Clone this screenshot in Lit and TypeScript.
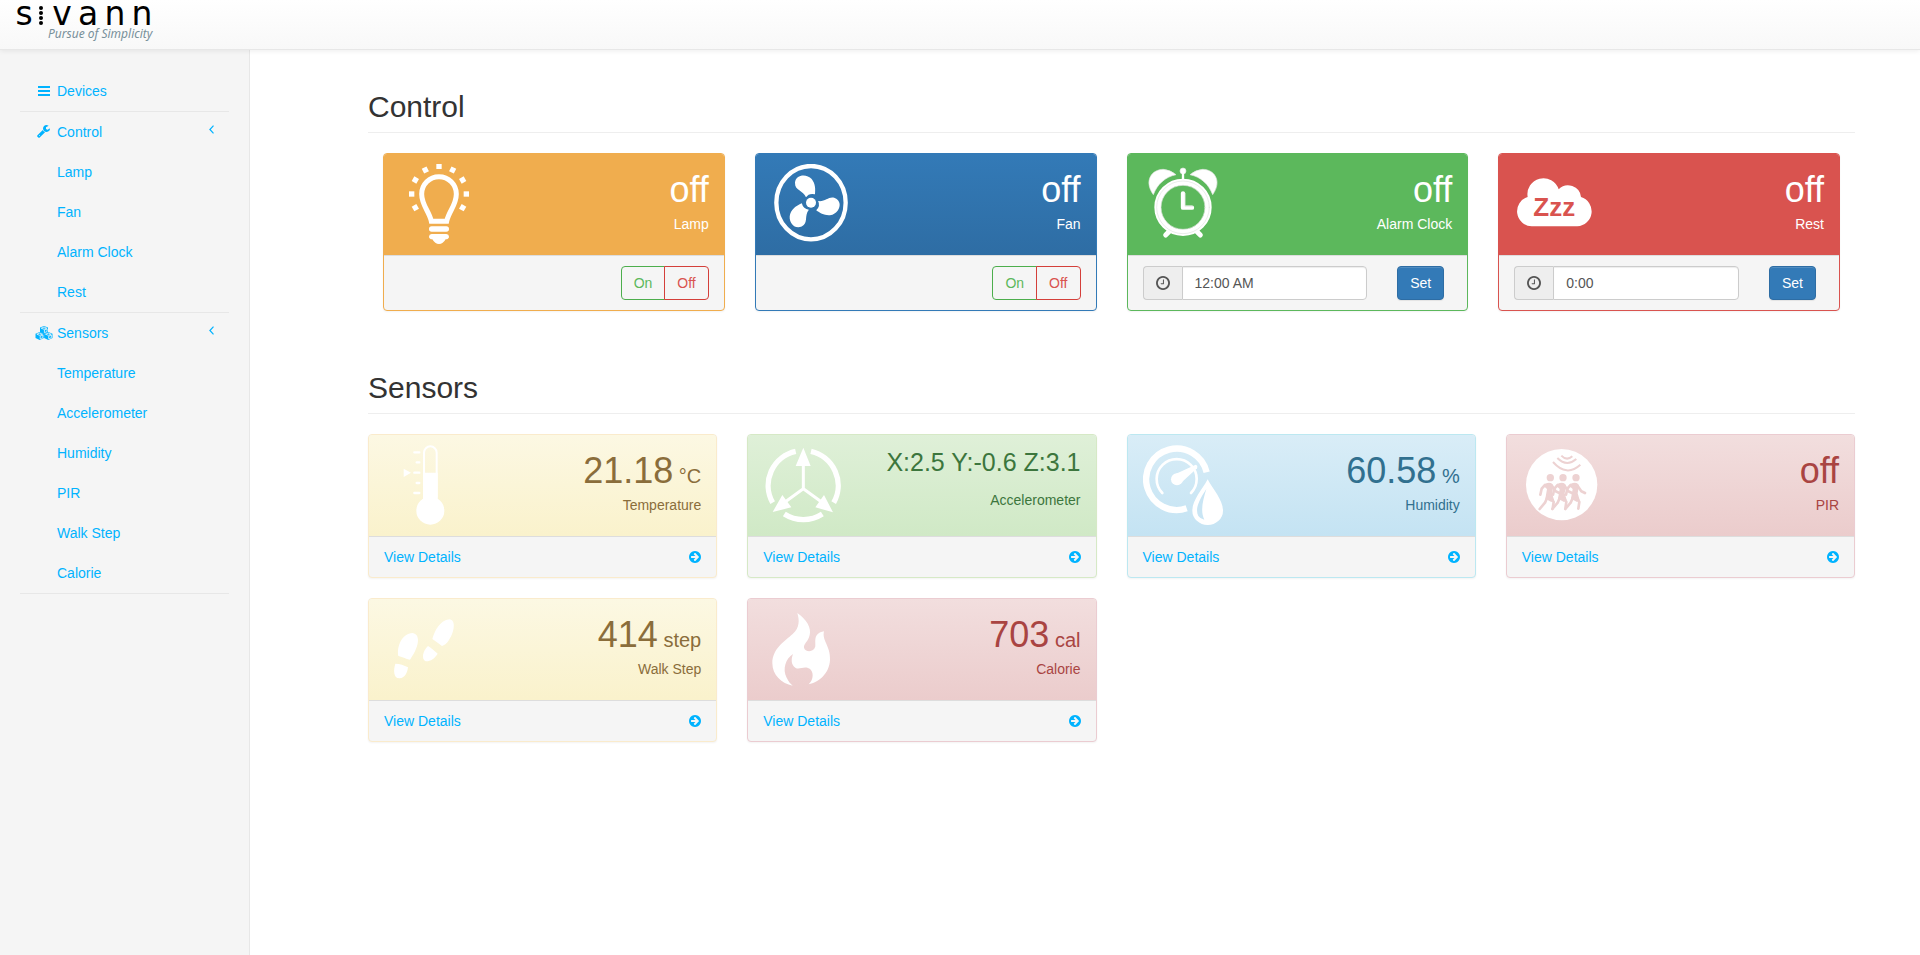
import { LitElement, html, svg, css, nothing } from "lit";
import { customElement, state } from "lit/decorators.js";

const wrench = svg`<path d="M384 1344q0-26-19-45t-45-19-45 19-19 45 19 45 45 19 45-19 19-45zm644-420l-682 682q-37 37-90 37-52 0-91-37l-106-108q-38-36-38-90 0-53 38-91l681-681q39 98 114.500 173.500t173.500 114.500zm634-435q0 39-23 106-47 134-164.500 217.500t-258.500 83.500q-185 0-316.500-131.500t-131.500-316.500 131.500-316.500 316.500-131.500q58 0 121.500 16.500t107.500 46.500q16 11 16 28t-16 28l-293 169v224l193 107q5-3 79-48.500t135.500-81 70.500-35.500q15 0 23.500 10t8.500 25z"/>`;

const menuIcons: Record<string, unknown> = {
  bars: html`<svg class="nav-icon" viewBox="0 0 18 14" aria-hidden="true"><path d="M3 2h12v2H3zM3 6h12v2H3zM3 10h12v2H3z"/></svg>`,
  wrench: html`<svg class="nav-icon" viewBox="-256 0 2304 1792" aria-hidden="true">${wrench}</svg>`,
  cubes: html`<svg class="nav-icon" viewBox="0 0 18 14" aria-hidden="true">
    <path d="M9 0l4 1.600v4.300L9 7.800 5 5.900V1.600zM4.700 6l4.200 1.800v4.300l-4.200 1.900-4.200-1.900V7.800zM13.300 6l4.200 1.800v4.300l-4.200 1.900-4.200-1.900V7.800z"/>
    <g fill="none" stroke="#f5f5f5" stroke-width=".8"><path d="M6.200 2.200L9 3.300l2.800-1.100L9 1.100zM9.400 4v2.700l2.700-1.200V2.900zM1.900 8.200l2.800 1.100 2.800-1.100L4.700 7.100zM5.200 10.200v2.700l2.700-1.200V9zM10.500 8.200l2.800 1.100 2.800-1.100-2.800-1.100zM13.700 10.200v2.700l2.700-1.200V9z"/></g>
  </svg>`,
};

const chevron = html`<svg class="chevron" viewBox="0 0 5 9" aria-hidden="true"><path d="M4.500 .7L.9 4.500l3.600 3.800" fill="none" stroke="currentColor" stroke-width="1.200"/></svg>`;

const arrow = html`<svg class="arrow" viewBox="128 128 1536 1536" aria-hidden="true"><path d="M1413 896q0-27-18-45l-91-91-362-362q-18-18-45-18t-45 18l-91 91q-18 18-18 45t18 45l189 189h-502q-26 0-45 19t-19 45v128q0 26 19 45t45 19h502l-189 189q-19 19-19 45t19 45l91 91q18 18 45 18t45-18l362-362 91-91q18-18 18-45zm251 0q0 209-103 385.500t-279.500 279.500-385.500 103-385.500-103-279.500-279.500-103-385.500 103-385.500 279.500-279.500 385.500-103 385.500 103 279.500 279.500 103 385.500z"/></svg>`;

const clock = html`<svg class="clock" viewBox="128 128 1536 1536" aria-hidden="true"><path d="M1000 544v448q0 14-9 23t-23 9h-290q-14 0-23-9t-9-23v-50q0-14 9-23t23-9h210v-366q0-14 9-23t23-9h48q14 0 23 9t9 23zm460 352q0-154-76-284t-206-206-282-76-282 76-206 206-76 284 76 284 206 206 282 76 282-76 206-206 76-284zm204 0q0 209-103 385.500t-279.500 279.500-385.500 103-385.500-103-279.500-279.500-103-385.500 103-385.500 279.500-279.500 385.500-103 385.500 103 279.500 279.500 103 385.500z"/></svg>`;

const blade = "M198 172C190 150 164 152 165 128C167 103 200 100 215 117C227 132 226 148 225 163Q207 158 198 172Z";
const bell = "M130 164C100 122 126 88 160 88Q180 89 198 104C166 111 142 132 130 164Z";
const walker = svg`<circle cx="181" cy="173" r="11"/>
  <path d="M160 197Q166 188 177 188Q189 188 190 199L186 220L192 240L184 246L166 236L171 207Z"/>
  <path d="M165 195L155 206L151 224M172 232L165 248L149 267M184 235L191 246L188 266M186 198L197 214L208 219" fill="none" stroke="#edd2d2" stroke-width="8" stroke-linecap="round" stroke-linejoin="round"/>`;

const pictures: Record<string, [string, unknown]> = {
  lamp: ["117 252 240 240", svg`
    ${[[237, 259, 0], [196, 270, -27], [278, 270, 27], [166, 300, -60], [308, 300, 60], [155, 342, 0], [319, 342, 0], [166, 383, 60], [308, 383, -60]].map(
      ([x, y, r]) => svg`<rect x=${x - 8} y=${y - 8} width="16" height="16" transform="rotate(${r} ${x} ${y})"/>`,
    )}
    <path d="M214 424C208 394 185 376 185 342A52 52 0 0 1 289 342C289 376 266 394 260 424Z" fill="none" stroke="#fff" stroke-width="15"/>
    <rect x="207" y="439" width="60" height="16" rx="8"/>
    <path d="M215 462H259Q267 463 267 470T257 478Q249 492 237 492T217 478Q207 477 207 470T215 462Z"/>`],
  fan: ["93 72 240 240", svg`
    <ellipse cx="213" cy="188" rx="104" ry="110" fill="none" stroke="#fff" stroke-width="13"/>
    <circle cx="213" cy="188" r="15"/>
    <path d=${blade}/><path d=${blade} transform="rotate(120 213 188)"/><path d=${blade} transform="rotate(240 213 188)"/>`],
  alarm: ["99 72 240 240", svg`
    <g stroke="#e2e6e2" stroke-width="2"><path d=${bell}/><path d=${bell} transform="translate(438 0) scale(-1 1)"/><circle cx="219" cy="93" r="9"/></g>
    <g fill="none" stroke="#fff" stroke-linecap="round" stroke-linejoin="round">
      <path d="M219 98V120" stroke-width="7"/>
      <path d="M182 270L167 285M256 270L271 285" stroke-width="15"/>
      <circle cx="219" cy="202" r="76" stroke-width="20"/>
      <path d="M219 160V203H246" stroke-width="13"/>
      <g stroke="#dfe4df" stroke-width="2"><circle cx="219" cy="202" r="79"/><circle cx="219" cy="202" r="66"/><path d="M225 160V199H249"/></g>
    </g>`],
  rest: ["102 72 240 240", svg`
    <path d="M155 259A45 45 0 0 1 143 171A48 48 0 0 1 236 148A39 39 0 0 1 303 171A45 45 0 0 1 292 259Z"/>
    <text class="zzz" x="160" y="228">Zzz</text>`],
  thermometer: ["72 75 240 240", svg`
    <rect x="192" y="79" width="38" height="170" rx="19" fill="none" stroke="#fff" stroke-width="6"/>
    <path d="M189 158H233V250H189Z"/><circle cx="211" cy="272" r="42"/>
    <path d="M163 97H178M170 127H178M163 158H178M170 189H178M163 219H178" stroke="#fff" stroke-width="7" stroke-linecap="round"/>
    <path d="M131 146L153 158L131 171Z"/>`],
  axes: ["69 75 240 240", svg`
    <g fill="none" stroke="#fff">
      <path d="M167 94A105 105 0 0 0 98 248M213 94A105 105 0 0 1 281 248M133 282A105 105 0 0 0 247 282" stroke-width="16"/>
      <path d="M190 130V206L130 250M190 206L250 250" stroke-width="9"/>
    </g>
    <path d="M190 83L212 138H167ZM98 276L127 225L154 262ZM279 277L252 225L226 262Z"/>`],
  gauge: ["99 75 240 240", svg`
    <g fill="none" stroke="#fff">
      <path d="M230 265A92 92 0 1 1 290 157" stroke-width="19"/>
      <path d="M157 219A60 60 0 1 1 243 219" stroke-width="8" stroke-linecap="round"/>
    </g>
    <circle cx="201" cy="178" r="18"/><path d="M190 165L257 134Q264 136 261 145L212 190Z"/>
    <path d="M293 178C310 210 339 240 339 272A46 43 0 0 1 247 272C247 240 276 210 293 178Z"/>
    <path d="M289 207C262 248 256 270 265 288Q271 297 283 299C270 272 279 240 289 207Z" fill="#c9e5f4"/>`],
  motion: ["96 75 240 240", svg`
    <circle cx="215" cy="194" r="107"/>
    <g fill="#edd2d2">
      ${walker}<g transform="translate(38 0)">${walker}</g><g transform="translate(77 0)">${walker}</g>
    </g>
    <path d="M214 107Q230 124 247 109M202 114Q230 142 259 117M189 126Q230 172 271 134" fill="none" stroke="#edd2d2" stroke-width="6"/>`],
  steps: ["72 72 240 240", svg`
    <path d="M115 213C110 185 125 146 158 144C185 149 175 190 150 224C138 222 125 215 115 213Z"/>
    <path d="M106 236C120 236 132 241 144 247C142 265 133 281 118 280C100 279 100 255 106 236Z"/>
    <path d="M217 162C225 135 240 107 268 103C288 104 284 140 267 165C260 177 252 181 246 183C237 177 227 168 217 162Z"/>
    <path d="M204 183C215 190 224 198 233 206C225 220 210 230 197 229C183 222 188 198 204 183Z"/>`],
  flame: ["69 72 240 240", svg`
    <path d="M172 84C200 103 215 130 209 150C205 170 190 176 192 188C195 202 222 203 226 184C228 170 218 146 252 139C245 167 272 183 270 225C268 265 237 292 206 298C222 282 221 260 209 251C192 241 178 256 166 248C153 240 153 222 159 207C138 220 126 252 140 278C146 290 152 297 158 302C125 296 97 270 97 235C97 190 135 168 158 147C180 127 178 105 172 84Z"/>`],
};

const picture = (name: string) => html`<svg class="picture" viewBox=${pictures[name][0]} aria-hidden="true">${pictures[name][1]}</svg>`;

interface Control { tone: string; icon: string; label: string; time?: string }
interface Sensor { tone: string; icon: string; label: string; value: string; unit?: string; compact?: boolean }

const controls: Control[] = [
  { tone: "orange", icon: "lamp", label: "Lamp" },
  { tone: "blue", icon: "fan", label: "Fan" },
  { tone: "green", icon: "alarm", label: "Alarm Clock", time: "12:00 AM" },
  { tone: "red", icon: "rest", label: "Rest", time: "0:00" },
];

const sensors: Sensor[] = [
  { tone: "warning", icon: "thermometer", label: "Temperature", value: "21.18", unit: "°C" },
  { tone: "success", icon: "axes", label: "Accelerometer", value: "X:2.5 Y:-0.6 Z:3.1", compact: true },
  { tone: "info", icon: "gauge", label: "Humidity", value: "60.58", unit: "%" },
  { tone: "danger", icon: "motion", label: "PIR", value: "off" },
  { tone: "warning", icon: "steps", label: "Walk Step", value: "414", unit: "step" },
  { tone: "danger", icon: "flame", label: "Calorie", value: "703", unit: "cal" },
];

const menu = [
  { icon: "bars", label: "Devices", items: [] as string[] },
  { icon: "wrench", label: "Control", items: controls.map((c) => c.label) },
  { icon: "cubes", label: "Sensors", items: sensors.map((s) => s.label) },
];

@customElement("app-root")
export class AppRoot extends LitElement {
  @state() private power: Record<string, string> = {};

  static styles = css`
    :host { display: flex; flex-direction: column; min-height: 100vh; background: #fff; color: #333; font: 14px/20px "Liberation Sans", Arial, sans-serif; }
    * { box-sizing: border-box; }
    a { color: #00b3ff; text-decoration: none; }
    svg { display: block; fill: currentColor; }
    .topbar { position: relative; z-index: 1; height: 50px; border-bottom: 1px solid #e7e7e7; background: linear-gradient(#fff, #f8f8f8); box-shadow: 0 1px 5px rgba(0, 0, 0, .075); }
    .brand { display: inline-block; padding-left: 12px; }
    .logo { width: 144px; height: 44px; }
    .wordmark { font: 33px "DejaVu Sans", sans-serif; fill: #000; text-anchor: middle; }
    .tagline { font: italic 12px "Noto Sans", "Open Sans", sans-serif; fill: #78909a; }
    .layout { flex: 1; display: flex; }
    .sidebar { flex: none; width: 250px; padding: 21px 20px; border-right: 1px solid #e7e7e7; background: #f5f5f5; }
    .menu, .submenu { list-style: none; margin: 0; padding: 0; }
    .group { border-bottom: 1px solid #e7e7e7; }
    .link { display: flex; align-items: center; gap: 4px; padding: 10px 15px; }
    .submenu .link { padding-left: 37px; }
    .nav-icon { width: 18px; height: 14px; }
    .chevron { width: 5px; height: 9px; margin: 0 0 6px auto; }
    .content { flex: 1; min-width: 0; padding: 40px 65px 20px 118px; }
    .title { margin: 0 0 20px; padding-bottom: 9px; border-bottom: 1px solid #eee; font-size: 30px; line-height: 33px; font-weight: 400; }
    .cards { display: grid; grid-template-columns: repeat(4, minmax(0, 1fr)); gap: 20px 30px; }
    .controls { padding: 0 15px; margin-bottom: 60px; }
    .card { border: 1px solid var(--edge); border-radius: 4px; background: #f5f5f5; box-shadow: 0 1px 2px rgba(0, 0, 0, .05); overflow: hidden; }
    .head { display: flex; justify-content: space-between; padding: 10px 15px 11px; background: var(--fill); color: var(--ink); }
    .picture { flex: none; width: 80px; height: 80px; fill: #fff; }
    .zzz { font: 700 78px "Liberation Sans", Arial, sans-serif; fill: #d9534f; }
    .reading { padding-top: 1px; text-align: right; white-space: nowrap; }
    .value { font-size: 36px; line-height: 49px; }
    .unit { font-size: 20px; line-height: 20px; }
    .compact { font-size: 25px; line-height: 32px; margin-bottom: 12px; }
    .foot { display: flex; align-items: center; justify-content: space-between; padding: 10px 15px; border-top: 1px solid #ddd; }
    .arrow { width: 12px; height: 12px; }
    .switch { display: flex; margin-left: auto; }
    button, input { font: inherit; }
    .toggle, .set { height: 34px; padding: 6px 12px; border: 1px solid; border-radius: 4px; cursor: pointer; }
    .toggle { background: transparent; }
    .on { color: #5cb85c; border-color: #4cae4c; border-radius: 4px 0 0 4px; }
    .off { color: #d9534f; border-color: #d43f3a; border-radius: 0 4px 4px 0; margin-left: -1px; }
    .timer { gap: 30px; padding-right: 23px; }
    .field { flex: 1; min-width: 0; display: flex; }
    .addon { display: flex; align-items: center; padding: 0 12px; border: 1px solid #ccc; border-right: 0; border-radius: 4px 0 0 4px; background: #eee; color: #555; }
    .clock { width: 14px; height: 14px; }
    .time { flex: 1; min-width: 0; height: 34px; padding: 6px 12px; border: 1px solid #ccc; border-radius: 0 4px 4px 0; background: #fff; color: #555; box-shadow: inset 0 1px 1px rgba(0, 0, 0, .075); }
    .set { color: #fff; background: #337ab7; border-color: #2e6da4; box-shadow: inset 0 1px 0 rgba(255, 255, 255, .15), 0 1px 1px rgba(0, 0, 0, .075); }
    .orange { --edge: #f0ad4e; --fill: #f0ad4e; --ink: #fff; }
    .blue { --edge: #337ab7; --fill: linear-gradient(#337ab7, #2e6da4); --ink: #fff; }
    .green { --edge: #5cb85c; --fill: #5cb85c; --ink: #fff; }
    .red { --edge: #d9534f; --fill: #d9534f; --ink: #fff; }
    .warning { --edge: #faebcc; --fill: linear-gradient(#fcf8e3, #faf2cc); --ink: #8a6d3b; }
    .success { --edge: #d6e9c6; --fill: linear-gradient(#dff0d8, #d0e9c6); --ink: #3c763d; }
    .info { --edge: #bce8f1; --fill: linear-gradient(#d9edf7, #c4e3f3); --ink: #31708f; }
    .danger { --edge: #ebccd1; --fill: linear-gradient(#f2dede, #ebcccc); --ink: #a94442; }
    @media (max-width: 1500px) { .cards { grid-template-columns: repeat(2, minmax(0, 1fr)); } .content { padding-left: 40px; padding-right: 40px; } }
  `;

  private setPower(label: string, value: string) {
    this.power = { ...this.power, [label]: value };
  }

  private renderControl(c: Control) {
    return html`<article class="card ${c.tone}">
      <div class="head">
        ${picture(c.icon)}
        <div class="reading"><div class="value">${this.power[c.label] ?? "off"}</div><div>${c.label}</div></div>
      </div>
      ${c.time
        ? html`<div class="foot timer">
            <label class="field"><span class="addon">${clock}</span><input class="time" type="text" aria-label="${c.label} time" .value=${c.time} /></label>
            <button class="set" type="button" @click=${() => this.setPower(c.label, "on")}>Set</button>
          </div>`
        : html`<div class="foot">
            <div class="switch" role="group" aria-label=${c.label}>
              <button class="toggle on" type="button" @click=${() => this.setPower(c.label, "on")}>On</button>
              <button class="toggle off" type="button" @click=${() => this.setPower(c.label, "off")}>Off</button>
            </div>
          </div>`}
    </article>`;
  }

  private renderSensor(s: Sensor) {
    return html`<article class="card ${s.tone}">
      <div class="head">
        ${picture(s.icon)}
        <div class="reading">
          <div class="value ${s.compact ? "compact" : ""}">${s.value}${s.unit ? html`<span class="unit"> ${s.unit}</span>` : nothing}</div>
          <div>${s.label}</div>
        </div>
      </div>
      <a class="foot" href="#"><span>View Details</span>${arrow}</a>
    </article>`;
  }

  render() {
    return html`
      <header class="topbar">
        <a class="brand" href="#" aria-label="sivann">
          <svg class="logo" viewBox="0 0 144 44">
            <text class="wordmark" y="25"><tspan x="12">s</tspan><tspan x="50">v</tspan><tspan x="76">a</tspan><tspan x="103">n</tspan><tspan x="130">n</tspan></text>
            <g fill="#000"><circle cx="29" cy="8" r="2"/><circle cx="29" cy="13" r="2"/><circle cx="29" cy="18" r="2"/><circle cx="29" cy="23" r="2"/></g>
            <text class="tagline" x="36" y="38">Pursue of Simplicity</text>
          </svg>
        </a>
      </header>
      <div class="layout">
        <nav class="sidebar">
          <ul class="menu">
            ${menu.map((g) => html`<li class="group">
              <a class="link" href="#">${menuIcons[g.icon]}<span>${g.label}</span>${g.items.length ? chevron : nothing}</a>
              ${g.items.length ? html`<ul class="submenu">${g.items.map((i) => html`<li><a class="link" href="#">${i}</a></li>`)}</ul>` : nothing}
            </li>`)}
          </ul>
        </nav>
        <main class="content">
          <h2 class="title">Control</h2>
          <section class="cards controls">${controls.map((c) => this.renderControl(c))}</section>
          <h2 class="title">Sensors</h2>
          <section class="cards">${sensors.map((s) => this.renderSensor(s))}</section>
        </main>
      </div>`;
  }
}
